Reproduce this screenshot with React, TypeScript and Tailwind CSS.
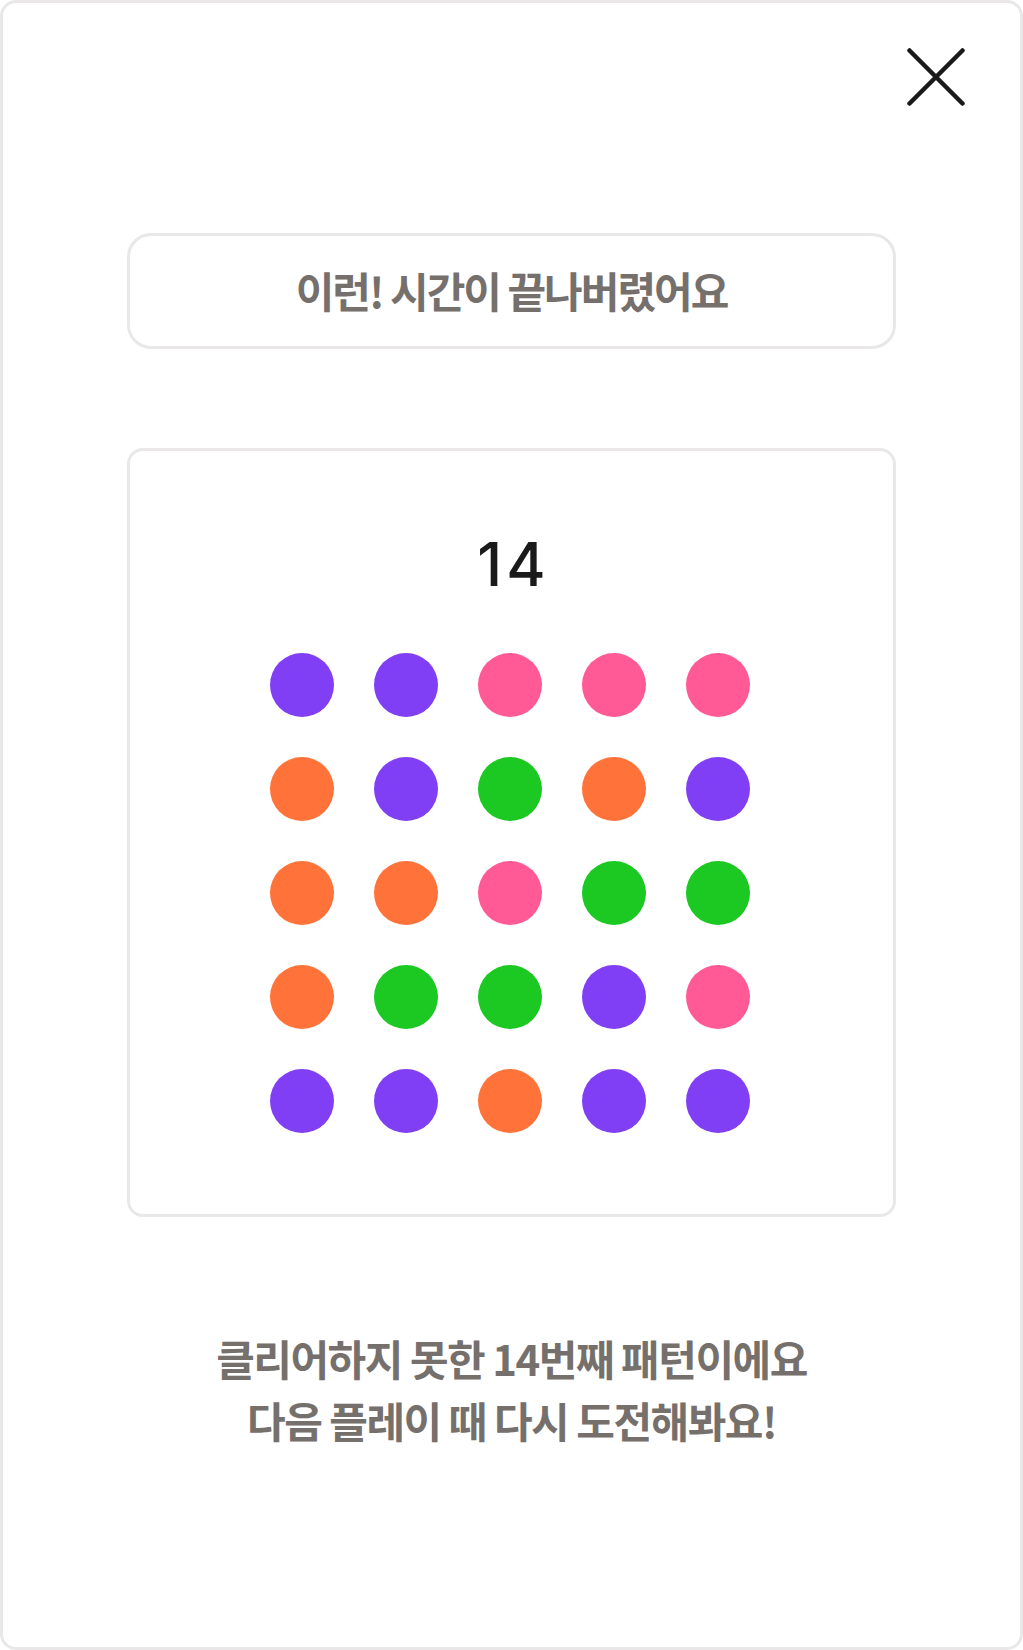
import React from "react"

type Dot = "p" | "k" | "o" | "g"

const dotColor: Record<Dot, string> = {
  p: "bg-[#803ff5]",
  k: "bg-[#ff5a95]",
  o: "bg-[#ff733b]",
  g: "bg-[#1bc922]",
}

const pattern: Dot[][] = [
  ["p", "p", "k", "k", "k"],
  ["o", "p", "g", "o", "p"],
  ["o", "o", "k", "g", "g"],
  ["o", "g", "g", "p", "k"],
  ["p", "p", "o", "p", "p"],
]

const kr = { fontFamily: '"Noto Sans CJK KR", "Noto Sans", sans-serif' }

export default function App() {
  return (
    <div className="w-[1023px] h-[1650px] bg-white">
      <div className="w-full h-full border-[3px] border-[#e9e7e7] rounded-[16px] flex flex-col items-center">
        {/* Close */}
        <div className="w-full flex justify-end pt-[45px] pr-[55px]">
          <button className="w-[58px] h-[58px]" aria-label="close">
            <svg width="58" height="58" viewBox="0 0 58 58" fill="none">
              <path d="M2.5 2.5L55.5 55.5M55.5 2.5L2.5 55.5" stroke="#1a1a1a" strokeWidth="4.5" strokeLinecap="round" />
            </svg>
          </button>
        </div>

        {/* Title */}
        <div className="mt-[127px] w-[769px] h-[116px] border-[3px] border-[#e9e7e7] rounded-[24px] flex items-center justify-center">
          <p style={kr} className="text-[42px] font-bold text-[#76706d] tracking-[-2px] leading-none -mt-[3px]">
            이런! 시간이 끝나버렸어요
          </p>
        </div>

        {/* Pattern */}
        <div className="mt-[99px] w-[769px] h-[769px] border-[3px] border-[#e9e7e7] rounded-[16px] flex flex-col items-center pt-[83px]">
          <p style={{ fontFamily: "Inter, sans-serif" }} className="text-[60px] font-medium text-[#1a1a1a] leading-[60px] tracking-[4px] pl-[4px]">
            14
          </p>
          <div className="mt-[59px] -ml-[4px] grid grid-cols-5 gap-[40px]">
            {pattern.flat().map((d, i) => (
              <div key={i} className={`w-[64px] h-[64px] rounded-full ${dotColor[d]}`} />
            ))}
          </div>
        </div>

        {/* Message */}
        <div style={kr} className="mt-[110px] text-center text-[42px] font-bold text-[#76706d] tracking-[-1.5px] leading-[62px]">
          <p>클리어하지 못한 14번째 패턴이에요</p>
          <p>다음 플레이 때 다시 도전해봐요!</p>
        </div>
      </div>
    </div>
  )
}
